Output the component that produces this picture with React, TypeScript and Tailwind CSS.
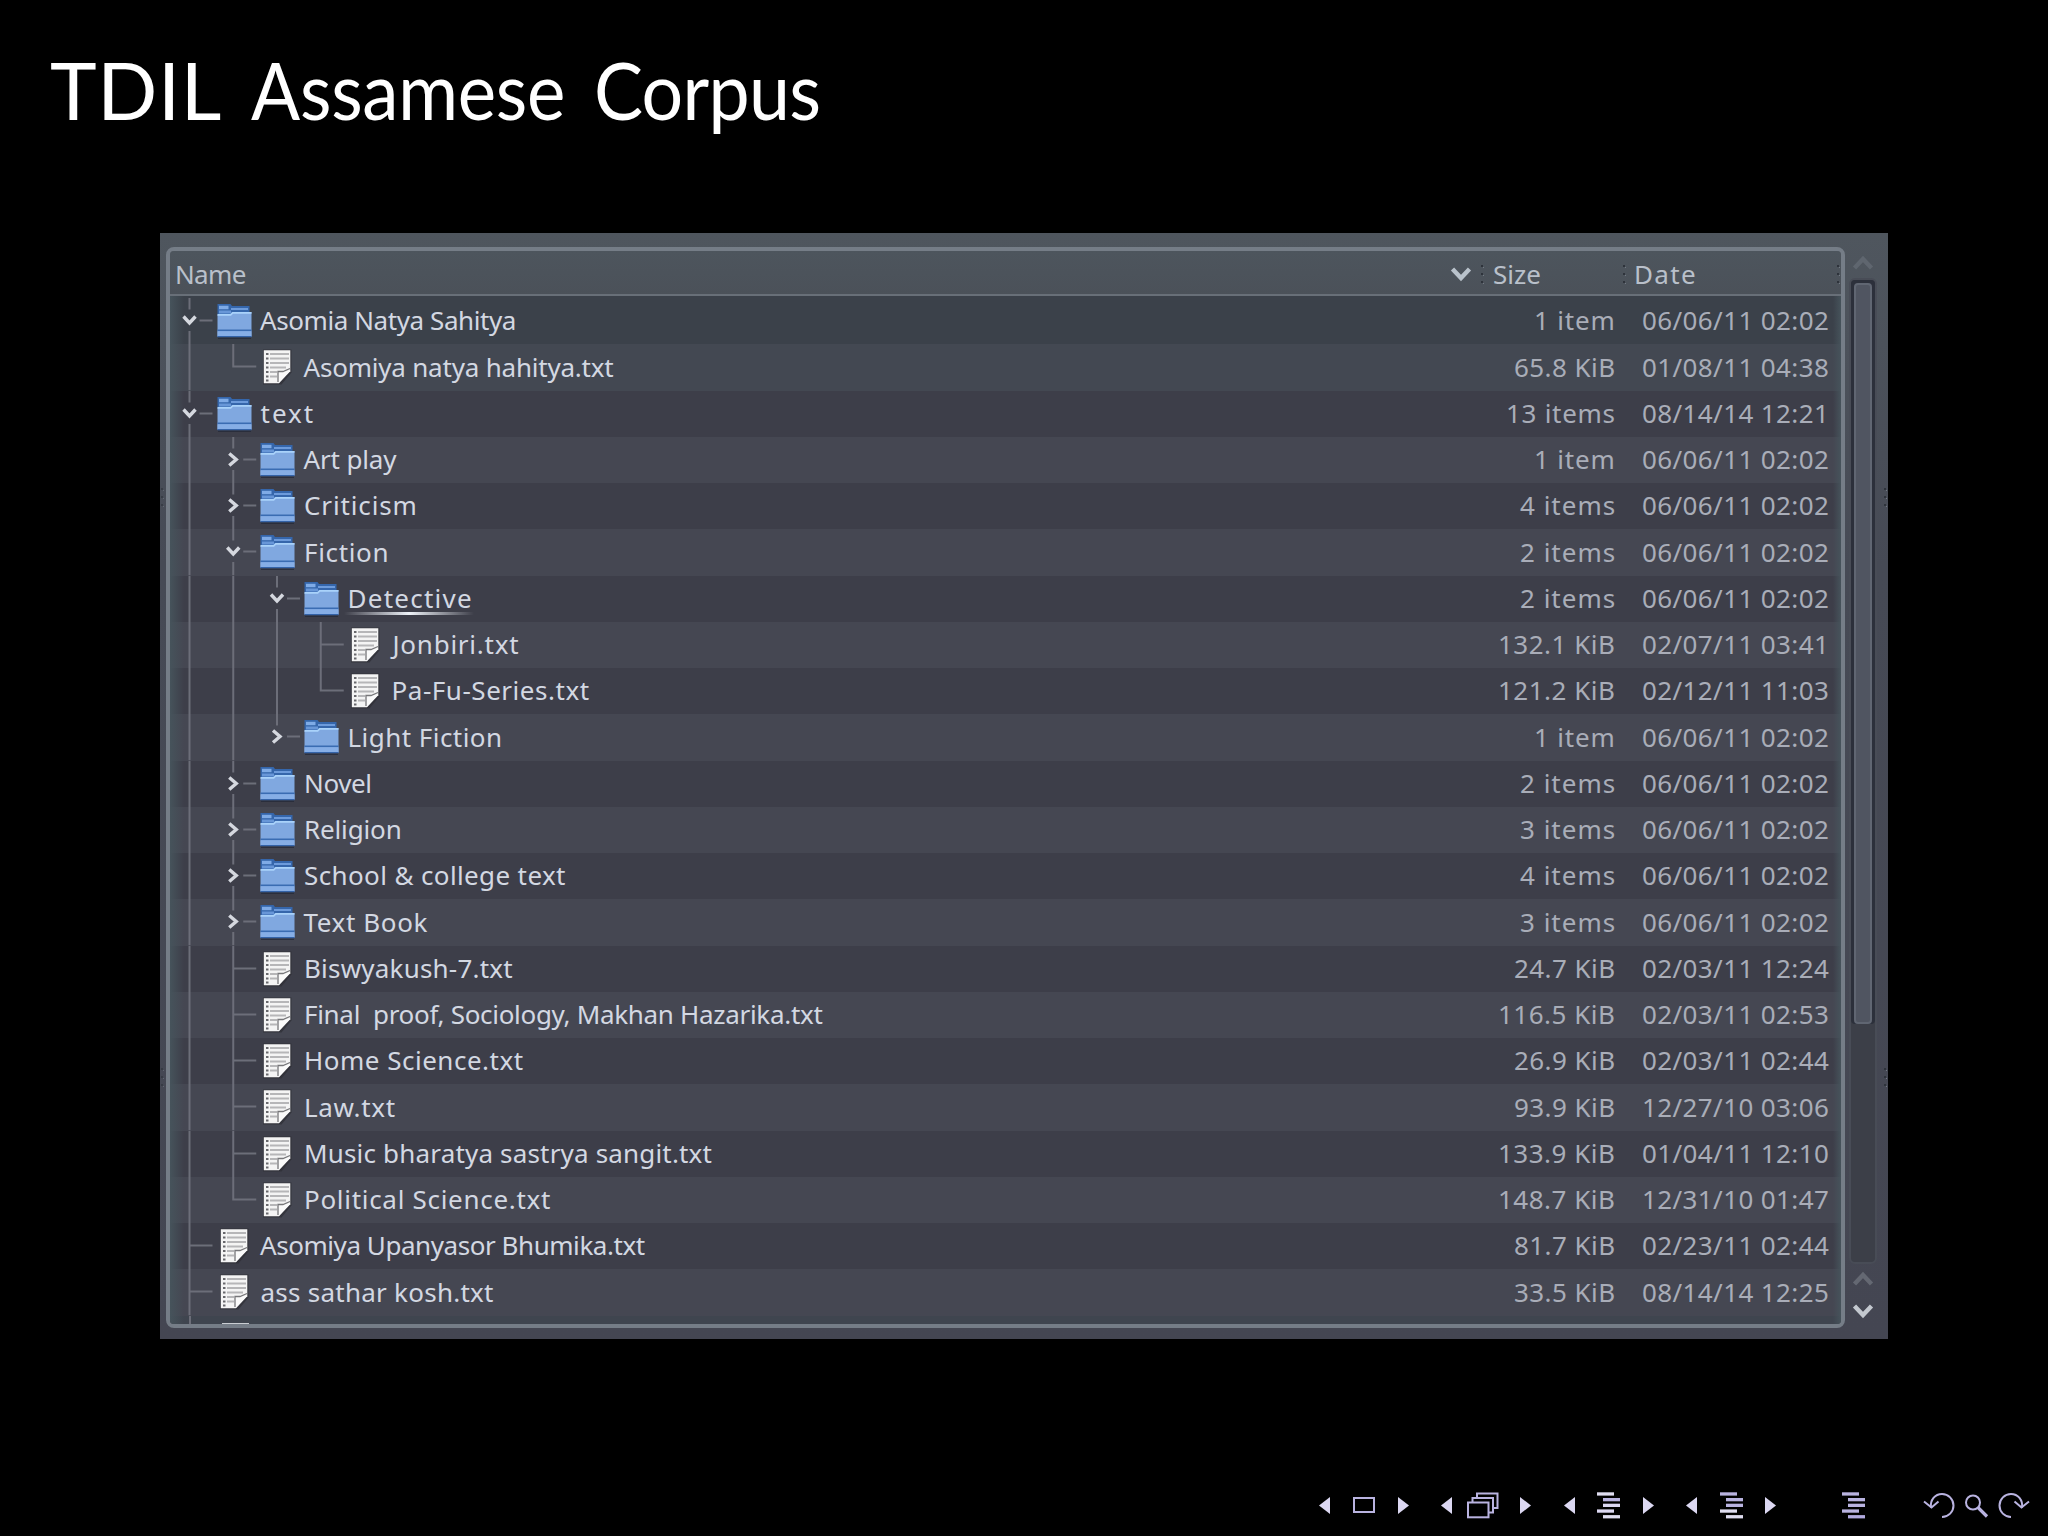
import { useLayoutEffect, useRef, useState } from "react";

interface Entry {
  name: string;
  kind: "open" | "closed" | "file";
  level: number;
  last?: boolean;
  current?: boolean;
  x: number;
  w: number;
  size: string;
  sizeW: number;
  date: string;
}

const entries: Entry[] = [
  { name: "Asomia Natya Sahitya", kind: "open", level: 0, x: 261.5, w: 253, size: "1 item", sizeW: 78, date: "06/06/11 02:02" },
  { name: "Asomiya natya hahitya.txt", kind: "file", level: 1, last: true, x: 305, w: 307, size: "65.8 KiB", sizeW: 98, date: "01/08/11 04:38" },
  { name: "text", kind: "open", level: 0, x: 262, w: 50, size: "13 items", sizeW: 106, date: "08/14/14 12:21" },
  { name: "Art play", kind: "closed", level: 1, x: 305, w: 90, size: "1 item", sizeW: 78, date: "06/06/11 02:02" },
  { name: "Criticism", kind: "closed", level: 1, x: 305.5, w: 110, size: "4 items", sizeW: 92, date: "06/06/11 02:02" },
  { name: "Fiction", kind: "open", level: 1, x: 305.5, w: 82, size: "2 items", sizeW: 92, date: "06/06/11 02:02" },
  { name: "Detective", kind: "open", level: 2, current: true, x: 349, w: 121, size: "2 items", sizeW: 92, date: "06/06/11 02:02" },
  { name: "Jonbiri.txt", kind: "file", level: 3, x: 394, w: 123.5, size: "132.1 KiB", sizeW: 114, date: "02/07/11 03:41" },
  { name: "Pa-Fu-Series.txt", kind: "file", level: 3, last: true, x: 393, w: 195, size: "121.2 KiB", sizeW: 114, date: "02/12/11 11:03" },
  { name: "Light Fiction", kind: "closed", level: 2, last: true, x: 349, w: 151.5, size: "1 item", sizeW: 78, date: "06/06/11 02:02" },
  { name: "Novel", kind: "closed", level: 1, x: 305.5, w: 65.5, size: "2 items", sizeW: 92, date: "06/06/11 02:02" },
  { name: "Religion", kind: "closed", level: 1, x: 305.5, w: 95, size: "3 items", sizeW: 92, date: "06/06/11 02:02" },
  { name: "School & college text", kind: "closed", level: 1, x: 305.5, w: 258.5, size: "4 items", sizeW: 92, date: "06/06/11 02:02" },
  { name: "Text Book", kind: "closed", level: 1, x: 305, w: 121, size: "3 items", sizeW: 92, date: "06/06/11 02:02" },
  { name: "Biswyakush-7.txt", kind: "file", level: 1, x: 305.5, w: 206, size: "24.7 KiB", sizeW: 98, date: "02/03/11 12:24" },
  { name: "Final  proof, Sociology, Makhan Hazarika.txt", kind: "file", level: 1, x: 305.5, w: 516, size: "116.5 KiB", sizeW: 114, date: "02/03/11 02:53" },
  { name: "Home Science.txt", kind: "file", level: 1, x: 305.5, w: 216.5, size: "26.9 KiB", sizeW: 98, date: "02/03/11 02:44" },
  { name: "Law.txt", kind: "file", level: 1, x: 305.5, w: 88, size: "93.9 KiB", sizeW: 98, date: "12/27/10 03:06" },
  { name: "Music bharatya sastrya sangit.txt", kind: "file", level: 1, x: 305.5, w: 404.5, size: "133.9 KiB", sizeW: 114, date: "01/04/11 12:10" },
  { name: "Political Science.txt", kind: "file", level: 1, last: true, x: 305.5, w: 243, size: "148.7 KiB", sizeW: 114, date: "12/31/10 01:47" },
  { name: "Asomiya Upanyasor Bhumika.txt", kind: "file", level: 0, x: 261.5, w: 382.5, size: "81.7 KiB", sizeW: 98, date: "02/23/11 02:44" },
  { name: "ass sathar kosh.txt", kind: "file", level: 0, x: 262, w: 229.5, size: "33.5 KiB", sizeW: 98, date: "08/14/14 12:25" },
];

// Spreads the letters so that the text fills the given width
const Fit = ({ text, width, className = "" }: { text: string; width: number; className?: string }) => {
  const ref = useRef<HTMLSpanElement>(null);
  const [spacing, setSpacing] = useState(0);

  useLayoutEffect(() => {
    if (!ref.current) return;
    const natural = ref.current.offsetWidth;
    setSpacing((width - natural) / (text.length - 1));
  }, [text, width]);

  return (
    <span className={`block shrink-0 ${className}`} style={{ width }}>
      <span ref={ref} className="inline-block whitespace-pre" style={{ letterSpacing: spacing }}>
        {text}
      </span>
    </span>
  );
};

const FolderIcon = () => (
  <svg className="block" width="36" height="36" viewBox="0 0 36 36">
    <path d="M1 34.5h33v1.5H1z" fill="#252a3a" opacity="0.8" />
    <path d="M0.5 1h13l1.5 2h17.5v8H0.5z" fill="#3566ab" />
    <path d="M2 2.8h9.5v3.4H2z" fill="#7fabe6" />
    <path d="M14 5h17v2H14z" fill="#6d9bdb" />
    <path d="M2 7.5h12v3H2z" fill="#6897d8" />
    <path d="M0.5 11.5h12.5l2-2.5h19.5v25h-34z" fill="#80a8e0" />
    <path d="M0.5 11h13l2-2h19v1.7h-18.5l-2 2H0.5z" fill="#a9d2fa" />
    <path d="M0.5 26.5h34v1.7H0.5z" fill="#3a6cb2" />
    <path d="M0.5 28.2h34v4.8H0.5z" fill="#86aee6" />
    <path d="M0.5 33h34v1.3H0.5z" fill="#3463a8" />
  </svg>
);

const FileIcon = () => (
  <svg className="ml-[3px] block" width="30" height="36" viewBox="0 0 30 36">
    <path d="M0 0.5h28.5v23l-10 12H0z" fill="#2d2e35" opacity="0.7" />
    <path d="M0.8 1.2h26.5v21L15.8 34.2H0.8z" fill="#f4f4f4" />
    <path d="M7 5h19M7 9.5h19M7 14h19M7 18.5h16M7 23h7M7 27.5h7" stroke="#b6b6b8" strokeWidth="1.8" />
    <path d="M3 5h2.5M3 9.5h2.5M3 14h2.5M3 18.5h2.5M3 23h2.5M3 27.5h2.5M3 31.5h2.5" stroke="#68686c" strokeWidth="1.8" />
    <path d="M15.8 34.2V22.5l11.5-1z" fill="#fafafa" />
    <path d="M15 33V22.5h5l7-3" fill="none" stroke="#77777a" strokeWidth="1.3" />
  </svg>
);

const Branch = ({ entry }: { entry: Entry }) => {
  const width = 46.5 + 43.75 * entry.level;
  const x = 19.5 + 43.75 * entry.level;
  const folder = entry.kind !== "file";
  return (
    <svg className="block shrink-0" width={width} height="46.25" viewBox={`0 0 ${width} 46.25`} fill="none">
      <g stroke="#6c6e79" strokeWidth="2">
        {Array.from({ length: entry.level }, (_, i) => (
          <path key={i} d={`M${19.5 + 43.75 * i} 0v46.25`} />
        ))}
        {folder ? (
          <>
            <path d={`M${x} 0v11.5M${x + 10} 22.5h13`} />
            {!entry.last && <path d={`M${x} 33v13.25`} />}
          </>
        ) : (
          <path d={`M${x} 0V${entry.last ? 23.5 : 46.25}M${x} 22.5h23`} />
        )}
      </g>
      {entry.kind === "open" && (
        <path d={`M${x - 6} 18.5l6 6.5l6-6.5`} stroke="#d5d8df" strokeWidth="3.4" />
      )}
      {entry.kind === "closed" && (
        <path d={`M${x - 4} 16.5l7 6l-7 6`} stroke="#d5d8df" strokeWidth="3.4" />
      )}
    </svg>
  );
};

const Row = ({ entry, index }: { entry: Entry; index: number }) => {
  const tints =
    index < 2
      ? ["bg-[#3b414a]", "bg-[#434852]"]
      : ["bg-[#3d3e49]", "bg-[#454752]"];
  const iconEnd = 252.5 + 43.75 * entry.level;
  return (
    <div className={`flex h-[46.25px] shrink-0 items-center ${tints[index % 2]}`}>
      <Branch entry={entry} />
      <div className="w-9 shrink-0">{entry.kind === "file" ? <FileIcon /> : <FolderIcon />}</div>
      <div className="relative -mt-[1.5px] text-[#d3d8e2]" style={{ marginLeft: entry.x - iconEnd - 1.5 }}>
        <Fit text={entry.name} width={entry.w + 3} />
        {entry.current && (
          <div className="absolute -left-1 bottom-[1px] h-[3px] w-[130px] bg-linear-to-r from-transparent via-[#eef2f8] to-transparent" />
        )}
      </div>
      <div className="-mt-[1.5px] ml-auto flex text-[#a9adb8]">
        <Fit text={entry.size} width={entry.sizeW + 3} />
        <Fit text={entry.date} width={187} className="mr-[12px] ml-[27px]" />
      </div>
    </div>
  );
};

const Grip = ({ className = "" }: { className?: string }) => (
  <svg className={`block shrink-0 ${className}`} width="5" height="20" viewBox="0 0 5 20">
    <path d="M1 1h2v2H1zM1 9h2v2H1zM1 17h2v2H1z" fill="#2e333b" />
    <path d="M3 3h1v1H3zM3 11h1v1H3zM3 19h1v1H3z" fill="#727983" />
  </svg>
);

const Chevron = ({ up, className }: { up?: boolean; className: string }) => (
  <svg className={`block shrink-0 ${className}`} width="22" height="16" viewBox="0 0 22 16" fill="none">
    <path d={up ? "M2.5 13l8.5-9l8.5 9" : "M2.5 3l8.5 9l8.5-9"} stroke="currentColor" strokeWidth="4.4" />
  </svg>
);

const Arrow = ({ right, className = "" }: { right?: boolean; className?: string }) => (
  <svg className={`block shrink-0 ${className}`} width="11" height="17" viewBox="0 0 11 17">
    <path d={right ? "M0 0l11 8.5L0 17z" : "M11 0L0 8.5L11 17z"} fill="#dcd8f2" />
  </svg>
);

const Outline = ({ colors, className }: { colors: string[]; className: string }) => (
  <svg className={`block shrink-0 ${className}`} width="23" height="27" viewBox="0 0 23 27">
    {colors.map((color, i) => (
      <rect key={i} x={i === 0 || i === 3 ? 0 : 6} y={0.3 + i * 5.7} width="17" height="3.3" fill={color} />
    ))}
  </svg>
);

const BackIcon = ({ className }: { className: string }) => (
  <svg className={`block shrink-0 ${className}`} width="32" height="27" viewBox="0 0 32 27" fill="none" stroke="#b9b3e0" strokeWidth="2">
    <path d="M8 15.5C7 8 12 2 19 2a11.5 11.5 0 0 1 0 23" />
    <path d="M1 9.5l7.5 6l7-6" />
  </svg>
);

const SlideNav = () => (
  <div className="mt-[151px] ml-[1319px] flex h-[30px] w-[729px] items-center">
    <Arrow />
    <svg className="ml-[23px] block shrink-0" width="22" height="16" viewBox="0 0 22 16">
      <rect x="1" y="1" width="20" height="14" fill="none" stroke="#b9b3e0" strokeWidth="2" />
    </svg>
    <Arrow right className="ml-[23px]" />
    <Arrow className="ml-[32px]" />
    <svg className="ml-[15px] block shrink-0" width="32" height="27" viewBox="0 0 32 27" fill="#000" stroke="#b9b3e0" strokeWidth="2">
      <rect x="10" y="1.5" width="20.5" height="14.5" />
      <rect x="5.5" y="6" width="20.5" height="14.5" />
      <rect x="1" y="10.5" width="20.5" height="14.8" />
    </svg>
    <Arrow right className="ml-[21px]" />
    <Arrow className="ml-[33px]" />
    <Outline className="ml-[22px]" colors={["#dfddf0", "#b9b3e0", "#dcd8f2", "#dcd8f2", "#dfddf0"]} />
    <Arrow right className="ml-[23px]" />
    <Arrow className="ml-[32px]" />
    <Outline className="ml-[23px]" colors={["#b9b3e0", "#b9b3e0", "#b9b3e0", "#dfddf0", "#dfddf0"]} />
    <Arrow right className="ml-[22px]" />
    <Outline className="ml-[66px]" colors={["#b9b3e0", "#b9b3e0", "#b9b3e0", "#b9b3e0", "#b0a9de"]} />
    <BackIcon className="ml-[58px]" />
    <svg className="ml-[10px] block shrink-0" width="24" height="27" viewBox="0 0 24 27" fill="none" stroke="#b9b3e0">
      <circle cx="8" cy="10.5" r="7" strokeWidth="2" />
      <path d="M13 15.5l9 9" strokeWidth="3.2" />
    </svg>
    <BackIcon className="ml-[9px] -scale-x-100" />
  </div>
);

export default function App() {
  return (
    <div className="flex h-[1536px] w-[2048px] flex-col overflow-hidden bg-black font-['Noto_Sans',sans-serif] text-[26px] leading-[36px]">
      {/* Slide title */}
      <h1 className="flex h-[233px] shrink-0 pt-[37px] pl-[50px] font-['Lato',sans-serif] text-[79px] leading-[106px] text-white">
        <Fit text="TDIL" width={171} />
        <Fit text="Assamese" width={342} className="ml-[30px] origin-left scale-x-[0.92]" />
        <Fit text="Corpus" width={244} className="ml-[1px] origin-left scale-x-[0.93]" />
      </h1>

      {/* File manager */}
      <div className="relative ml-[160px] flex h-[1106px] w-[1728px] shrink-0 bg-linear-to-b from-[#4f565e] via-[#464a55] via-30% to-[#444652] pt-[14px] pl-[6px]">
        <div className="flex h-[1081px] w-[1679px] shrink-0 flex-col overflow-hidden rounded-[8px] border-4 border-[#757d87] shadow-[inset_0_0_0_1px_#596069]">
          <div className="flex h-[45px] shrink-0 items-center border-b-2 border-[#686f78] bg-linear-to-b from-[#4d555d] to-[#4b5159] pt-[2px] text-[#b9c0ca]">
            <Fit text="Name" width={71} className="ml-[5px]" />
            <Chevron className="ml-[1204px] text-[#b9c2cb]" />
            <Grip className="ml-[8px]" />
            <Fit text="Size" width={48} className="ml-[8px]" />
            <Grip className="ml-[81px]" />
            <Fit text="Date" width={62} className="ml-[7px]" />
            <Grip className="ml-auto" />
          </div>
          <div className="relative flex min-h-0 flex-1 flex-col overflow-hidden bg-[#3f454f]">
            <div className="h-[2px] shrink-0 bg-[#3b414a]" />
            {entries.map((entry, i) => (
              <Row key={entry.name} entry={entry} index={i} />
            ))}
            <div className="flex shrink-0">
              <div className="ml-[18.5px] h-[10px] w-[2px] bg-[#6c6e79]" />
              <div className="mt-[7px] ml-[31px] h-[3px] w-[27px] bg-[#c9cdd2]" />
            </div>
            <div className="absolute inset-y-0 left-0 w-[14px] bg-linear-to-r from-[#46535b] to-transparent" />
            <div className="absolute inset-y-0 right-0 w-[8px] bg-linear-to-l from-[#46535b] to-transparent" />
          </div>
        </div>

        {/* Scroll bar */}
        <div className="ml-[4px] flex w-[28px] flex-col items-center pt-[8px]">
          <Chevron up className="text-[#5f666f]" />
          <div className="mt-[7px] h-[986px] w-[28px] shrink-0 rounded-[6px] border-2 border-[#484c56] bg-[#3c3f48]">
            <div className="h-[744px] rounded-[4px] bg-[#2c303b] px-[3px] pt-[3px]">
              <div className="h-[741px] rounded-[4px] border-2 border-[#606672] bg-[#505561]" />
            </div>
          </div>
          <Chevron up className="mt-[7px] text-[#646872]" />
          <Chevron className="mt-[16px] text-[#c3c8cf]" />
        </div>

        <Grip className="absolute top-[254px] left-0 opacity-60" />
        <Grip className="absolute top-[834px] left-0 opacity-60" />
        <Grip className="absolute top-[254px] right-0" />
        <Grip className="absolute top-[834px] right-0" />
      </div>

      <SlideNav />
    </div>
  );
}
